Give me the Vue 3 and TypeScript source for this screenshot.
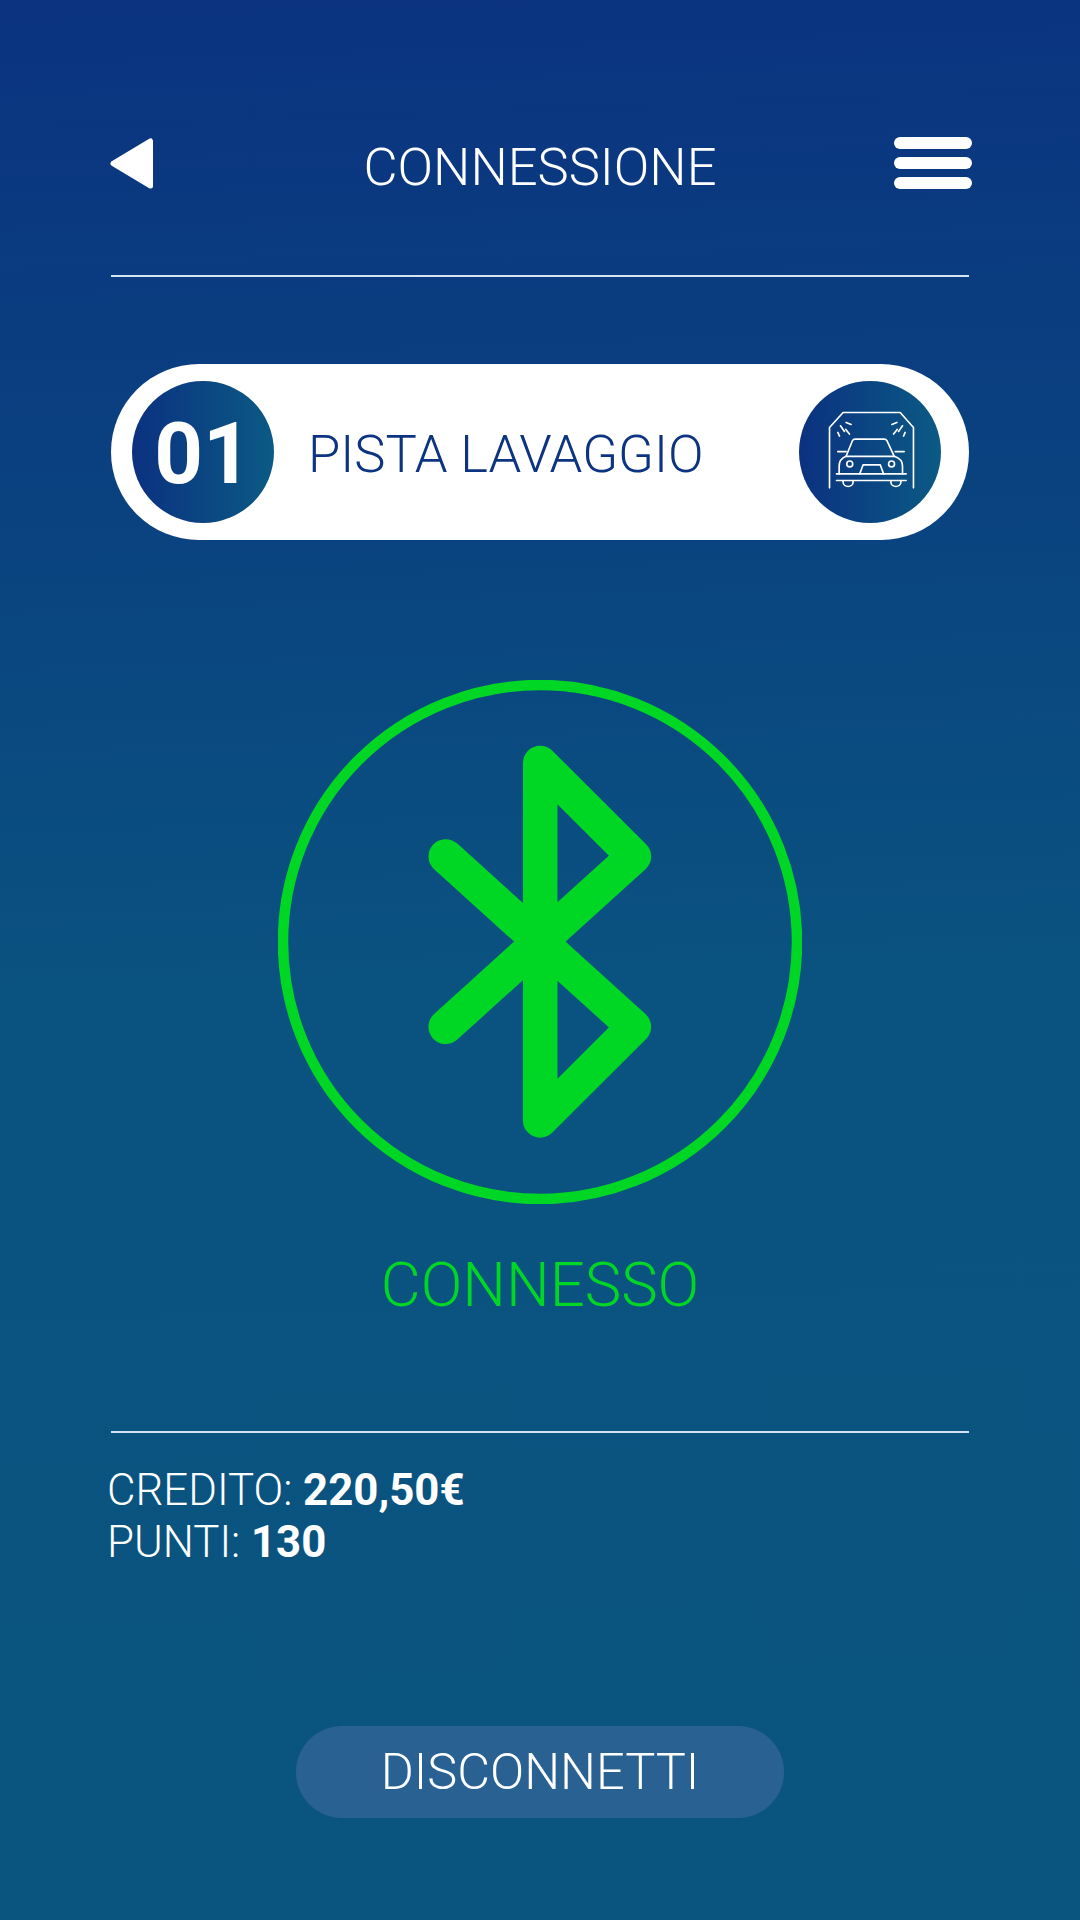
<script setup lang="ts">
const screenTitle: string = 'CONNESSIONE'
</script>

<template>
  <main class="screen">
    <header class="top">
      <svg class="back" viewBox="0 0 44 51" aria-label="Indietro">
        <path d="M3 25.5 L40.5 3 V48 Z" fill="#fff" stroke="#fff" stroke-width="5" stroke-linejoin="round" />
      </svg>
      <h1 class="title">{{ screenTitle }}</h1>
      <div class="burger" aria-label="Menu">
        <span></span><span></span><span></span>
      </div>
    </header>
    <div class="rule rule-top"></div>

    <section class="pill">
      <div class="disc num">01</div>
      <div class="pill-label">PISTA LAVAGGIO</div>
      <div class="disc">
        <svg class="car" viewBox="55 35 428 428" fill="none" stroke="#fff" stroke-width="5" stroke-linecap="round" stroke-linejoin="round">
          <path d="M147 357 V175 L188 130 H360 L400 175 V357" />
          <path d="M197 160 L212 166 M180 170 L192 187 M172 190 L177 201 M196 181 L207 195" />
          <path d="M350 160 L335 166 M367 170 L355 187 M375 190 L370 201 M351 181 L340 195" />
          <path d="M197 262 L216 215 Q218 210 224 210 H312 Q318 210 320 215 L342 262" />
          <path d="M172 248 H197 M345 248 H372" />
          <path d="M197 262 Q176 270 176 292 V315 M342 262 Q367 270 367 292 V315 M197 262 H342" />
          <path d="M168 315 H378 M168 335 H378" />
          <circle cx="208" cy="285" r="9" />
          <circle cx="334" cy="285" r="9" />
          <path d="M238 315 L248 288 H300 L310 315" />
          <path d="M188 337 V340 A15 13 0 0 0 218 340 V337 M332 337 V340 A15 13 0 0 0 362 340 V337" />
        </svg>
      </div>
    </section>

    <section class="status">
      <svg class="bt" viewBox="0 0 524 524" fill="none" aria-label="Bluetooth">
        <circle cx="262" cy="262" r="257" stroke="#00d624" stroke-width="10.5" />
        <path
          d="M167.7 176.4 L355.9 346.8 L262.2 440.4 V82.9 L355.9 176.4 L167.7 346.8"
          stroke="#00d624"
          stroke-width="34.5"
          stroke-linecap="round"
          stroke-linejoin="round"
        />
      </svg>
      <div class="connected">CONNESSO</div>
    </section>

    <div class="rule rule-bottom"></div>

    <section class="balance">
      <div>CREDITO: <strong>220,50€</strong></div>
      <div>PUNTI: <strong>130</strong></div>
    </section>

    <button class="disconnect" type="button">DISCONNETTI</button>
  </main>
</template>

<style scoped>
.screen {
  width: 1080px;
  height: 1920px;
  box-sizing: border-box;
  padding: 137px 111px 0;
  display: flex;
  flex-direction: column;
  overflow: hidden;
  color: #fff;
  font-family: Roboto, "Liberation Sans", sans-serif;
  font-weight: 300;
  background: linear-gradient(178deg, #0b3380 0%, #0a3e80 20%, #0a5380 52%, #0a5480 100%);
}
.top {
  height: 61px;
  margin: 0 -3px;
  display: grid;
  grid-template-columns: 1fr auto 1fr;
  align-items: start;
}
.back {
  width: 44px;
  height: 51px;
  margin: 1px 0 0 2px;
}
.title {
  margin: 4px 0 0;
  font-size: 52.5px;
  font-weight: 300;
  line-height: 52px;
  white-space: nowrap;
}
.burger {
  justify-self: end;
  display: flex;
  flex-direction: column;
  gap: 8px;
}
.burger span {
  display: block;
  width: 78px;
  height: 12px;
  border-radius: 6px;
  background: #fff;
}
.rule {
  height: 2px;
  background: #d4e3f2;
}
.rule-top {
  margin-top: 77px;
}
.pill {
  margin-top: 87px;
  height: 176px;
  border-radius: 88px;
  background: #fff;
  padding: 0 28px 0 21px;
  display: flex;
  align-items: center;
}
.disc {
  flex: none;
  width: 142px;
  height: 142px;
  border-radius: 50%;
  background: linear-gradient(90deg, #0b3180, #0b5a84);
  display: flex;
  align-items: center;
  justify-content: center;
}
.num {
  box-sizing: border-box;
  padding-top: 4px;
  color: #fff;
  font-size: 85px;
  font-weight: 700;
  line-height: 1;
}
.car {
  width: 142px;
  height: 142px;
}
.pill-label {
  flex: 1;
  margin: 4px 0 0 34px;
  color: #0d3480;
  font-size: 52.5px;
  line-height: 52px;
  white-space: nowrap;
}
.status {
  margin-top: 140px;
  display: flex;
  flex-direction: column;
  align-items: center;
}
.bt {
  width: 524px;
  height: 524px;
}
.connected {
  margin-top: 46px;
  color: #00d624;
  font-size: 61.5px;
  line-height: 70px;
  white-space: nowrap;
}
.rule-bottom {
  margin-top: 111px;
}
.balance {
  margin: 31px 0 0 -4px;
  font-size: 43.8px;
  line-height: 52px;
}
.balance strong {
  font-weight: 700;
}
.disconnect {
  align-self: center;
  margin-top: 158px;
  width: 488px;
  height: 92px;
  border: 0;
  border-radius: 46px;
  padding: 0;
  background: #2a6193;
  color: #fff;
  font: inherit;
  font-size: 50.5px;
  line-height: 92px;
  white-space: nowrap;
}
</style>
<style>
html, body { margin: 0; background: #0a5480; }
</style>
